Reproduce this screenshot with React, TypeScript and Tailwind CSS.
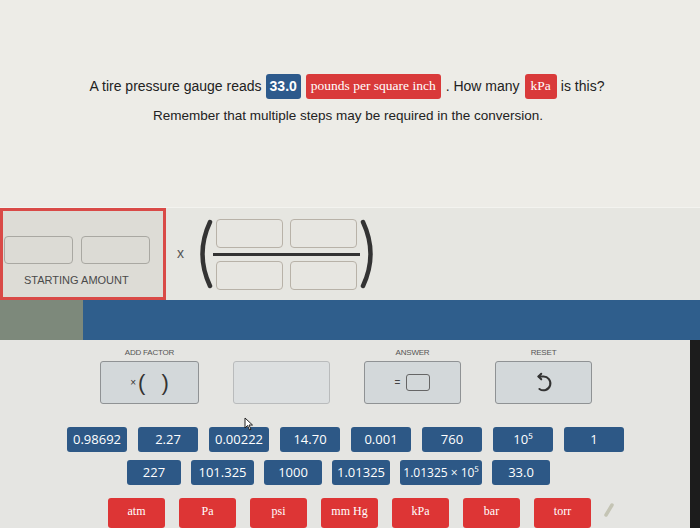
import React from "react"

const row1 = ["0.98692", "2.27", "0.00222", "14.70", "0.001", "760", "10⁵", "1"]
const row2 = [
  { label: "227", w: "w-[54px]", t: "text-[13px]" },
  { label: "101.325", w: "w-[63px]", t: "text-[13px]" },
  { label: "1000", w: "w-[58px]", t: "text-[13px]" },
  { label: "1.01325", w: "w-[58px]", t: "text-[13px]" },
  { label: "1.01325 × 10⁵", w: "w-[82px]", t: "text-[12px]" },
  { label: "33.0", w: "w-[58px]", t: "text-[13px]" },
]
const units = ["atm", "Pa", "psi", "mm Hg", "kPa", "bar", "torr"]

function Paren({ flip }: { flip?: boolean }) {
  return (
    <svg width="17" height="70" viewBox="0 0 17 70" className={flip ? "-scale-x-100" : ""}>
      <path d="M14 3 Q-1 35 14 67" fill="none" stroke="#333" strokeWidth="4.5" strokeLinecap="round" />
    </svg>
  )
}

function ResetIcon() {
  return (
    <svg width="22" height="22" viewBox="0 0 24 24" fill="none" stroke="#333" strokeWidth="2.2" strokeLinecap="round" strokeLinejoin="round">
      <path d="M6 5h5a7.5 7.5 0 1 1-4 13.5" />
      <path d="M9 2 6 5l3 3" />
    </svg>
  )
}

export default function App() {
  return (
    <div className="relative w-[700px] h-[528px] overflow-hidden bg-[#edece7] text-[#222] font-['Liberation_Sans',Arial,sans-serif]">
      {/* question */}
      <div className="pt-[74px] flex justify-center items-center text-[14px] mr-[6px]">
        <span>A tire pressure gauge reads</span>
        <span className="ml-[4px] h-[25px] px-[4px] flex items-center rounded-[3px] bg-[#2d5a8c] text-white font-bold">33.0</span>
        <span className="ml-[5px] h-[25px] px-[5px] flex items-center rounded-[3px] bg-[#d93a3a] text-white font-['Liberation_Serif',serif] text-[13.5px]">
          pounds per square inch
        </span>
        <span className="ml-[5px]">. How many</span>
        <span className="ml-[5px] h-[25px] px-[6px] flex items-center rounded-[3px] bg-[#d93a3a] text-white font-['Liberation_Serif',serif] text-[13.5px]">
          kPa
        </span>
        <span className="ml-[4px]">is this?</span>
      </div>
      <div className="mt-[8px] text-center text-[13.5px] leading-[18px] mr-[4px]">
        Remember that multiple steps may be required in the conversion.
      </div>

      {/* work area */}
      <div className="mt-[82px] h-[93px] flex items-center bg-[#e6e6e1] border-t border-[#f3f3ef]">
        <div className="w-[166px] h-[92px] border-[3px] border-[#d94a47] bg-[#dddcd6] flex flex-col">
          <div className="mt-[25px] ml-[1px] flex gap-[8px]">
            <div className="w-[69px] h-[28px] rounded-[4px] border border-[#a9a8a2] bg-[#dcdbd5]" />
            <div className="w-[69px] h-[28px] rounded-[4px] border border-[#a9a8a2] bg-[#dcdbd5]" />
          </div>
          <div className="mt-[8px] ml-[21px] text-[11px] text-[#4a4a4a]">STARTING AMOUNT</div>
        </div>
        <div className="ml-[11px] text-[14px] text-[#555] mt-[-2px]">x</div>
        <div className="ml-[12px] flex items-center">
          <Paren />
          <div className="flex flex-col items-center">
            <div className="flex gap-[7px]">
              <div className="w-[67px] h-[29px] rounded-[4px] border border-[#b8b2a8] bg-[#e7e6e1]" />
              <div className="w-[67px] h-[29px] rounded-[4px] border border-[#b8b2a8] bg-[#e7e6e1]" />
            </div>
            <div className="my-[5px] w-[147px] h-[3px] bg-[#333]" />
            <div className="flex gap-[7px]">
              <div className="w-[67px] h-[29px] rounded-[4px] border border-[#b8b2a8] bg-[#e7e6e1]" />
              <div className="w-[67px] h-[29px] rounded-[4px] border border-[#b8b2a8] bg-[#e7e6e1]" />
            </div>
          </div>
          <Paren flip />
        </div>
      </div>

      {/* band */}
      <div className="h-[40px] flex">
        <div className="w-[83px] bg-[#7d897b]" />
        <div className="flex-1 bg-[#2f5e8c]" />
      </div>

      {/* tool panel */}
      <div className="h-[195px] bg-[#e5e5e2] border-r-[10px] border-[#1c1c1c]">
        <div className="pt-[7px] ml-[100px] flex gap-[34px]">
          <div className="w-[99px] flex flex-col items-center">
            <div className="h-[14px] text-[8px] text-[#555] tracking-tight">ADD FACTOR</div>
            <div className="w-full h-[43px] rounded-[3px] border border-[#8f9294] bg-[#d3d8da] flex items-center justify-center gap-[2px] text-[#333]">
              <span className="text-[10px]">×</span>
              <span className="text-[22px] leading-none">(</span>
              <span className="w-[12px]" />
              <span className="text-[22px] leading-none">)</span>
            </div>
          </div>
          <div className="w-[97px] flex flex-col items-center">
            <div className="h-[14px]" />
            <div className="w-full h-[43px] rounded-[3px] border border-[#b9bbbc] bg-[#dcdfe0]" />
          </div>
          <div className="w-[97px] flex flex-col items-center">
            <div className="h-[14px] text-[8px] text-[#555] tracking-tight">ANSWER</div>
            <div className="w-full h-[43px] rounded-[3px] border border-[#8f9294] bg-[#d3d8da] flex items-center justify-center gap-[6px] text-[#444]">
              <span className="text-[10px]">=</span>
              <span className="w-[24px] h-[17px] rounded-[3px] border border-[#666]" />
            </div>
          </div>
          <div className="w-[97px] flex flex-col items-center">
            <div className="h-[14px] text-[8px] text-[#555] tracking-tight">RESET</div>
            <div className="w-full h-[43px] rounded-[3px] border border-[#8f9294] bg-[#d3d8da] flex items-center justify-center">
              <ResetIcon />
            </div>
          </div>
        </div>

        <div className="mt-[23px] ml-[67px] flex gap-[11px] font-['Open_Sans',sans-serif] text-[13px] text-white">
          {row1.map((n) => (
            <div key={n} className="w-[60px] h-[25px] rounded-[3px] bg-[#2d5886] flex items-center justify-center">
              {n}
            </div>
          ))}
        </div>
        <div className="mt-[8px] ml-[127px] flex gap-[10px] font-['Open_Sans',sans-serif] text-white">
          {row2.map((n) => (
            <div key={n.label} className={`${n.w} ${n.t} h-[25px] rounded-[3px] bg-[#2d5886] flex items-center justify-center whitespace-nowrap`}>
              {n.label}
            </div>
          ))}
        </div>
        <div className="mt-[13px] ml-[108px] flex items-start gap-[14px] font-['Liberation_Serif',serif] text-[12px] text-white">
          {units.map((u) => (
            <div key={u} className="w-[57px] h-[30px] rounded-[3px] bg-[#dd3535] flex items-center justify-center pb-[4px]">
              {u}
            </div>
          ))}
          <svg width="12" height="16" viewBox="0 0 12 16" className="ml-[-2px] mt-[4px]">
            <path d="M3 13 L9 3" stroke="#c4c4b4" strokeWidth="3.5" strokeLinecap="round" />
          </svg>
        </div>
      </div>

      {/* mouse cursor */}
      <svg width="10" height="14" viewBox="0 0 10 14" className="absolute left-[244px] top-[417px]">
        <path d="M1 1 L1 11 L3.5 8.5 L5.5 13 L7 12.3 L5 8 L8.5 8 Z" fill="#fff" stroke="#222" strokeWidth="1" strokeLinejoin="round" />
      </svg>
    </div>
  )
}
